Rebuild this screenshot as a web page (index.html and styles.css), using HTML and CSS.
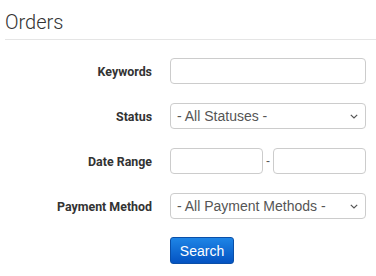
FILE: index.html
```html
<!DOCTYPE html>
<html>
<head>
<meta charset="utf-8">
<link rel="stylesheet" href="styles.css">
</head>
<body>
<div class="page">
  <h1 class="title">Orders</h1>
  <form class="form">
    <div class="row">
      <label class="label">Keywords</label>
      <div class="field"><input class="input" type="text"></div>
    </div>
    <div class="row">
      <label class="label">Status</label>
      <div class="field">
        <div class="select"><span>- All Statuses -</span>
          <svg class="chev" width="8" height="5" viewBox="0 0 8 5"><path d="M0.8 0.8 L4 4 L7.2 0.8" fill="none" stroke="#555" stroke-width="1.2"/></svg>
        </div>
      </div>
    </div>
    <div class="row">
      <label class="label">Date Range</label>
      <div class="field range">
        <input class="input" type="text"><span class="dash">-</span><input class="input" type="text">
      </div>
    </div>
    <div class="row">
      <label class="label">Payment Method</label>
      <div class="field">
        <div class="select"><span>- All Payment Methods -</span>
          <svg class="chev" width="8" height="5" viewBox="0 0 8 5"><path d="M0.8 0.8 L4 4 L7.2 0.8" fill="none" stroke="#555" stroke-width="1.2"/></svg>
        </div>
      </div>
    </div>
    <div class="row">
      <span class="label"></span>
      <div class="field"><button class="btn" type="button">Search</button></div>
    </div>
  </form>
</div>
</body>
</html>
```
FILE: styles.css
```css
html, body { margin: 0; padding: 0; background: #fff; }
.page { padding: 10px 0 0 5px; font-family: "Liberation Sans", Arial, sans-serif; }
.title {
  margin: 0;
  font-family: Roboto, sans-serif;
  font-weight: 300;
  font-size: 20px;
  line-height: 24px;
  color: #333;
  padding-bottom: 5px;
  border-bottom: 1px solid #e5e5e5;
}
.form { padding-top: 18px; }
.row { display: flex; align-items: center; margin-bottom: 19px; }
.label {
  width: 147px;
  text-align: right;
  font-family: Roboto, sans-serif;
  font-weight: 700;
  font-size: 12.4px;
  color: #333;
  margin-right: 18px;
  flex: none;
}
.field { width: 196px; display: flex; align-items: center; }
.input {
  box-sizing: border-box;
  width: 100%;
  height: 26px;
  border: 1px solid #ccc;
  border-radius: 4px;
  margin: 0;
  padding: 0 8px;
  background: #fff;
}
.range .input { width: 93px; }
.range .dash { width: 10px; text-align: center; font-size: 12px; color: #555; }
.select {
  box-sizing: border-box;
  width: 100%;
  height: 26px;
  border: 1px solid #ccc;
  border-radius: 4px;
  display: flex;
  align-items: center;
  justify-content: space-between;
  padding: 0 7px 0 6px;
  font-size: 14px;
  color: #555;
}
.chev { display: block; }
.btn {
  box-sizing: border-box;
  width: 64px;
  height: 27px;
  margin-top: -1px;
  border: 1px solid #0a4fa8;
  border-radius: 3px;
  background: linear-gradient(#1e85e6, #0453c2);
  color: #fff;
  font-family: "Liberation Sans", Arial, sans-serif;
  font-size: 14px;
  padding: 0;
}
```
